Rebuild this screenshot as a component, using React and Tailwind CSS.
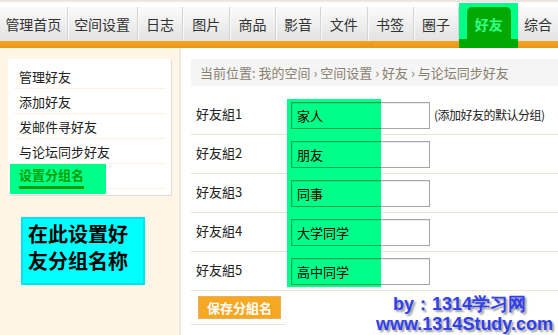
import React from 'react';

const tabs = [
  { label: '管理首页', w: 'w-[68px]' },
  { label: '空间设置', w: 'w-[70px]' },
  { label: '日志', w: 'w-[46px]' },
  { label: '图片', w: 'w-[47px]' },
  { label: '商品', w: 'w-[46px]' },
  { label: '影音', w: 'w-[45px]' },
  { label: '文件', w: 'w-[47px]' },
  { label: '书签', w: 'w-[46px]' },
  { label: '圈子', w: 'w-[46px]' },
];

const menu = ['管理好友', '添加好友', '发邮件寻好友', '与论坛同步好友'];

const groups = ['家人', '朋友', '同事', '大学同学', '高中同学'];

const App = () => {
  return (
    <div className="relative w-[558px] h-[335px] overflow-hidden bg-white font-['Noto_Sans_CJK_SC',sans-serif] text-[13px] text-[#222]">
      {/* top nav */}
      <div className="border-t-2 border-[#ece7da] pt-[5px]">
        <div className="flex h-[34px] bg-gradient-to-b from-[#fbfbfb] to-[#e2e2e2]">
          {tabs.map((t) => (
            <div
              key={t.label}
              className={`${t.w} flex items-center justify-center border-r border-[#d4d4d4] shadow-[1px_0_0_#fafafa] text-[14px] text-[#333]`}
            >
              {t.label}
            </div>
          ))}
          <div className="relative z-10 w-[59px] -mt-[4px] -mb-[7px] bg-[#00ff88]">
            <div className="absolute left-[8px] right-[7px] top-[4px] bottom-0 rounded-t-[5px] bg-[#00a800]" />
            <div className="absolute left-0 right-0 bottom-0 h-[9px] bg-[#00a800]" />
            <div className="relative flex h-[40px] items-center justify-center pt-[3px] text-[14px] font-bold text-[#33ff88]">
              好友
            </div>
          </div>
          <div className="flex w-[40px] items-center justify-center text-[14px] text-[#333]">综合</div>
        </div>
        <div className="h-[7px] bg-gradient-to-b from-[#f3a521] to-[#e8951a]" />
      </div>

      <div className="flex h-[288px]">
        {/* sidebar */}
        <div className="w-[181px] shrink-0 border-r-2 border-[#f0e8d8] bg-[#fff6e8] pl-[8px] pt-[11px]">
          <div className="w-[163px] bg-white pt-[5px] pb-[6px] px-[6px] shadow-[1px_1px_0_#e2ddd2]">
            {menu.map((m) => (
              <div key={m} className="h-[25px] border-b border-[#fdf2de] pl-[5px] leading-[25px] text-[#222]">
                {m}
              </div>
            ))}
            <div className="relative h-[25px] border-b border-[#fdf2de]">
              <div className="absolute left-[-4px] top-0 h-[30px] w-[96px] bg-[#00ff88]" />
              <span className="relative ml-[5px] inline-block border-b-[3px] border-[#00a000] font-bold leading-[22px] text-[#00a000]">
                设置分组名
              </span>
            </div>
          </div>
          <div className="ml-[13px] mt-[22px] h-[68px] w-[124px] border-2 border-[#00e6e6] bg-[#00ffff] px-[5px] pt-[1px] text-[20px] font-bold leading-[27px] text-black">
            <div>在此设置好</div>
            <div>友分组名称</div>
          </div>
        </div>

        {/* content */}
        <div className="relative flex-1 pl-[10px] pt-[11px]">
          <div className="h-[27px] bg-[#f5f5f5] pl-[9px] leading-[27px] text-[#8a8070]">
            当前位置: 我的空间 › 空间设置 › 好友 › 与论坛同步好友
          </div>
          <div className="relative mt-[10px]">
            <div className="absolute left-[96px] top-[3px] h-[188px] w-[94px] bg-[#00ff88]" />
            {groups.map((g, i) => (
              <div key={g} className="flex h-[39px] items-center border-b border-[#ebe4d6]">
                <div className="w-[100px] pl-[5px] -mt-[3px]">好友組{i + 1}</div>
                <div className="relative h-[27px] w-[139px] border border-black/35 shadow-[inset_1px_1px_0_rgba(0,0,0,0.08)] pl-[5px] leading-[25px] text-black">
                  {g}
                </div>
                {i === 0 && (
                  <div className="ml-[4px] whitespace-nowrap text-[12px] tracking-[-0.5px] text-[#222]">(添加好友的默认分组)</div>
                )}
              </div>
            ))}
            <div className="h-[34px] w-[95px] border-b border-[#ebe4d6] pl-[7px] pt-[5px]">
              <button className="h-[23px] w-[83px] border border-[#e8b060] bg-[#f6a823] text-[13px] font-bold text-white">
                保存分組名
              </button>
            </div>
          </div>
        </div>
      </div>

      {/* watermark */}
      <div className="absolute left-[376px] top-[294px] font-['Liberation_Sans',sans-serif] text-[18px] font-bold leading-[20px] text-[#3040ee] [text-shadow:2px_2px_2px_#9a9a9a]">
        <div className="pl-[17px]">by：1314学习网</div>
        <div>www.1314Study.com</div>
      </div>
    </div>
  );
};

export default App;
